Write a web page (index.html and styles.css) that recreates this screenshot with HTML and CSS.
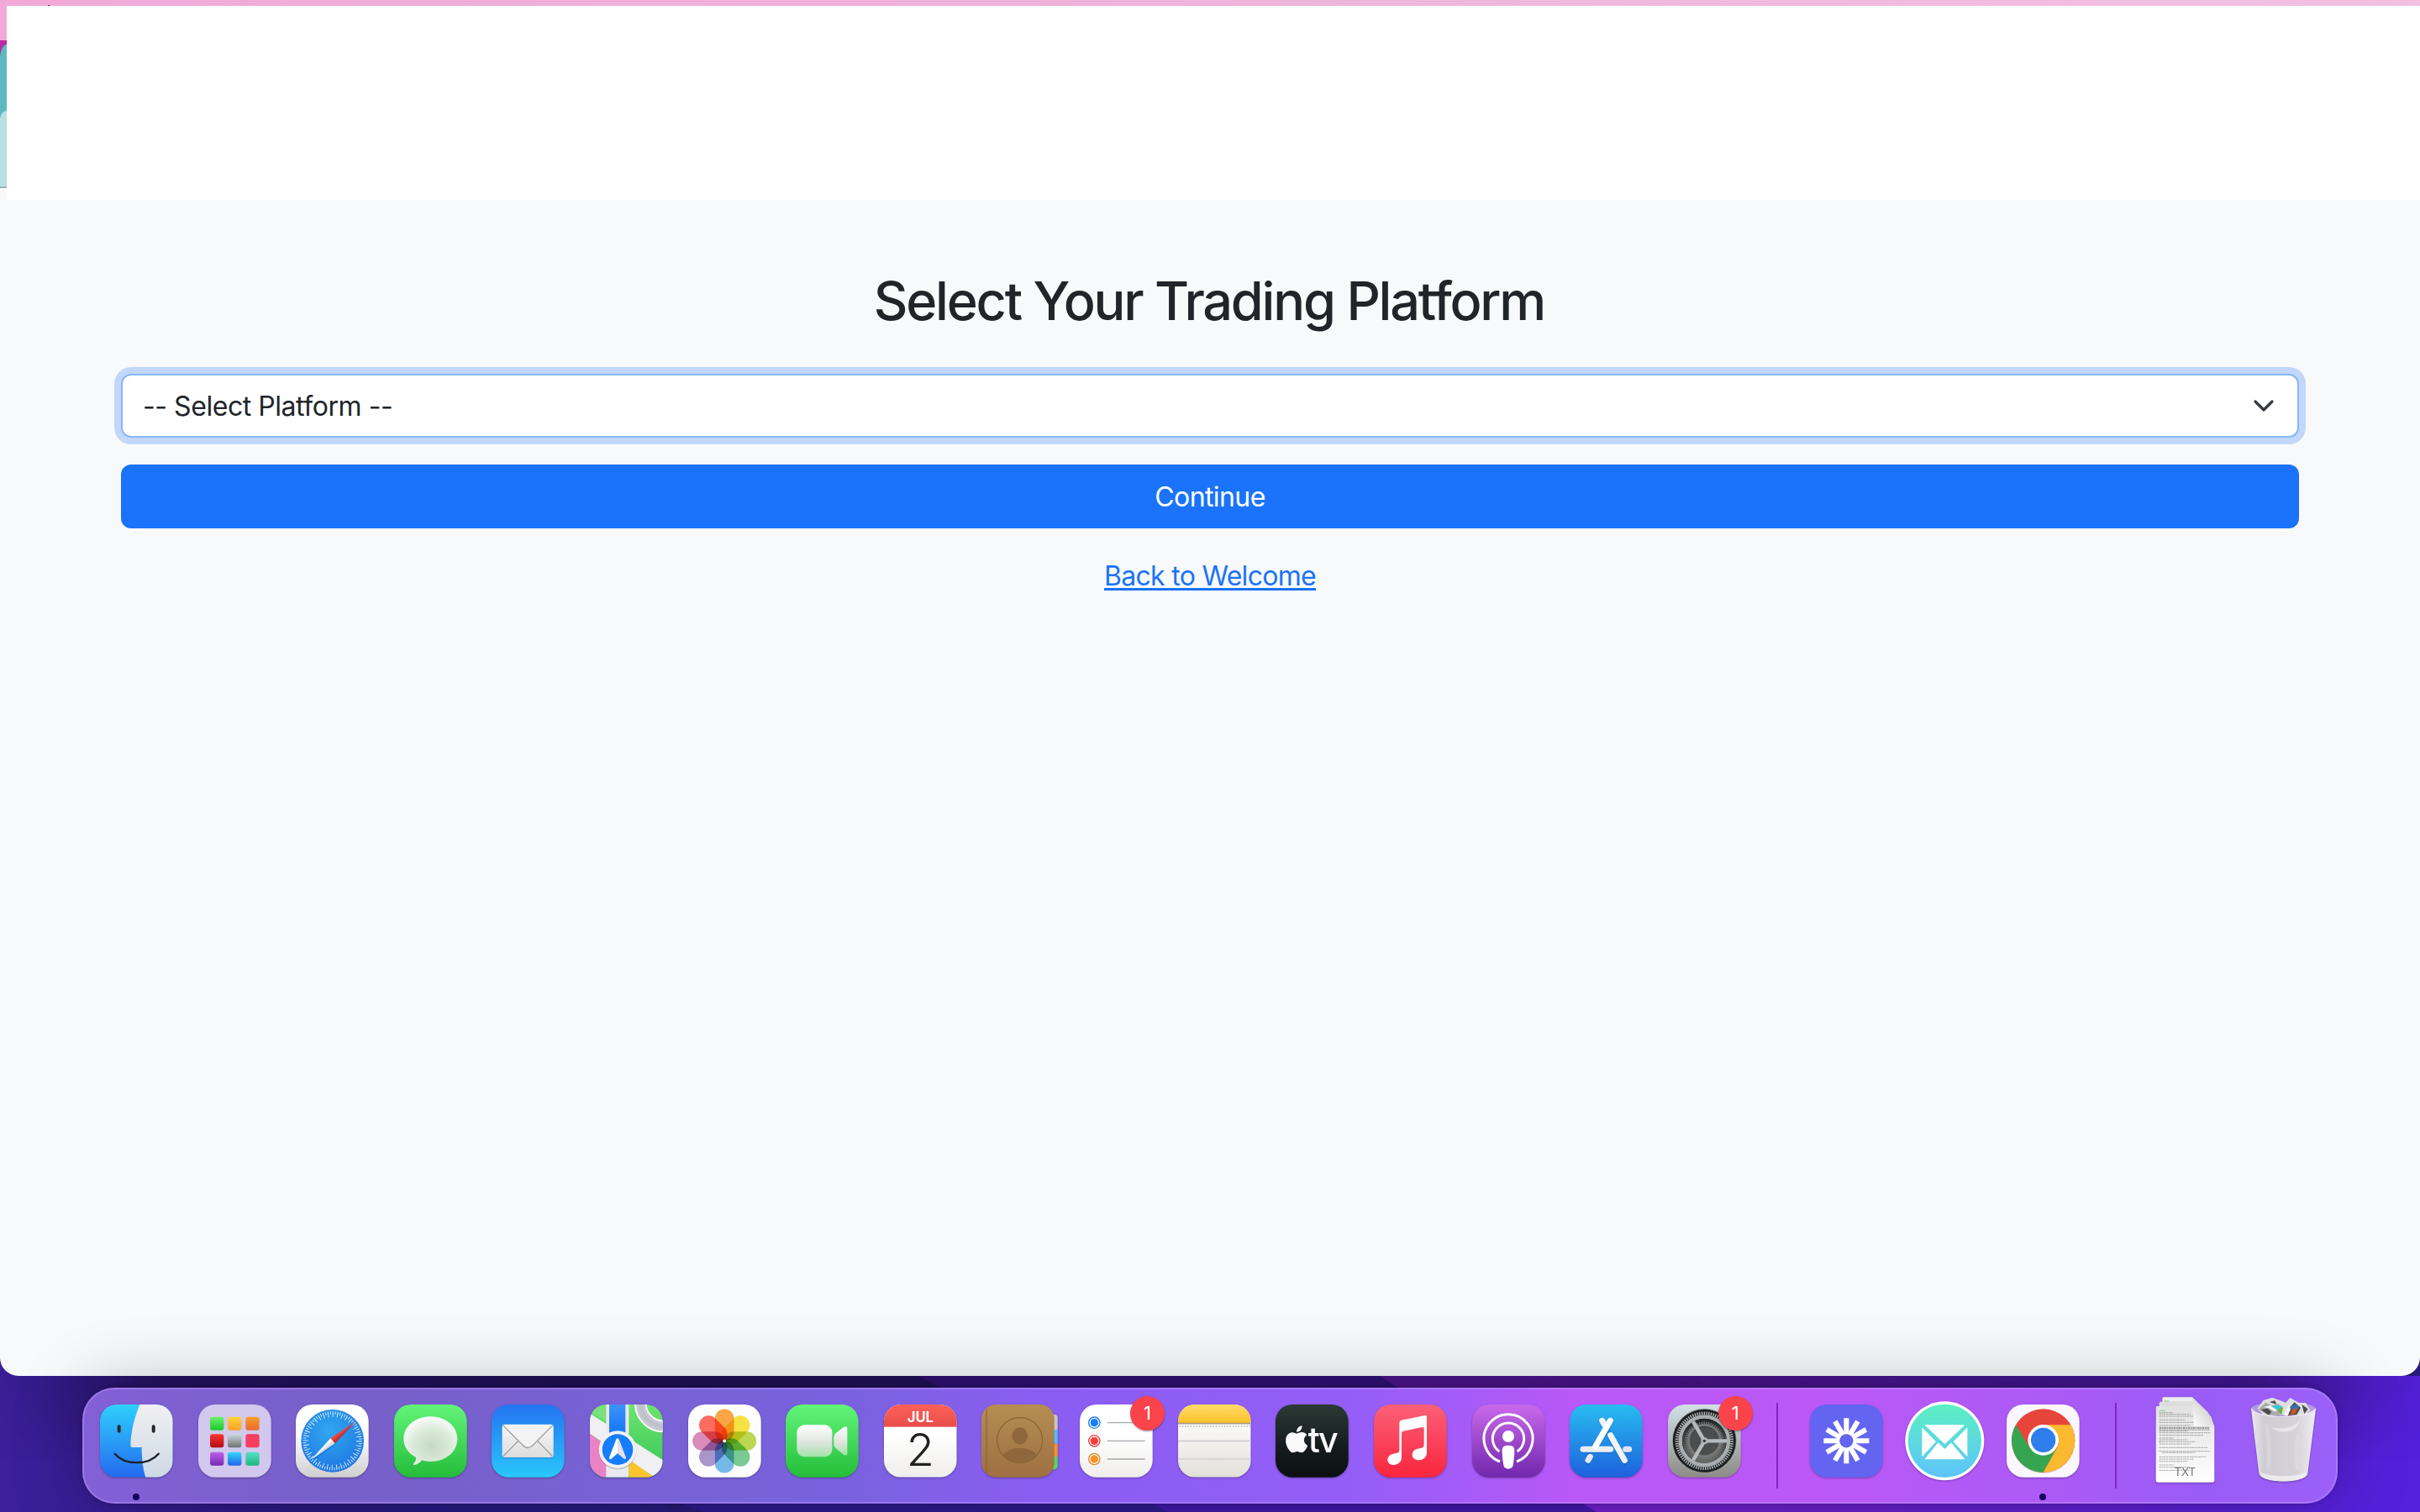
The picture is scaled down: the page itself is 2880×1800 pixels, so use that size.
FILE: index.html
```html
<!DOCTYPE html>
<html lang="en">
<head>
<meta charset="utf-8">
<title>Select Your Trading Platform</title>
<link rel="stylesheet" href="styles.css">
</head>
<body>
<svg class="wallpaper" viewBox="0 0 2880 200" preserveAspectRatio="none" aria-hidden="true">
  <defs>
    <linearGradient id="wpBase" x1="0" x2="1"><stop offset="0" stop-color="#3d1f9c"/><stop offset=".12" stop-color="#2b1a86"/><stop offset=".3" stop-color="#281b80"/></linearGradient>
    <linearGradient id="wpEnd" x1="0" x2="1"><stop offset="0" stop-color="#7a20d4"/><stop offset=".45" stop-color="#6a20d0"/><stop offset="1" stop-color="#5420dc"/></linearGradient>
    <linearGradient id="wpShade" x1="0" x2="1"><stop offset="0" stop-color="#180830" stop-opacity=".05"/><stop offset=".07" stop-color="#180830" stop-opacity=".5"/><stop offset=".93" stop-color="#180830" stop-opacity=".42"/><stop offset="1" stop-color="#180830" stop-opacity=".05"/></linearGradient>
    <linearGradient id="wpFade" x2="0" y2="1"><stop offset=".2" stop-color="#fff"/><stop offset="1" stop-color="#000"/></linearGradient>
    <mask id="wpMask"><rect y="30" width="2880" height="110" fill="url(#wpFade)"/></mask>
  </defs>
  <rect width="2880" height="200" fill="url(#wpBase)"/>
  <path d="M640 38 L1100 38 L1420 200 L800 200Z" fill="#281a7a"/>
  <path d="M790 184 L840 200 H1420 L1300 150Z" fill="#2e1c90"/>
  <path d="M1093 38 H1680 L1960 200 H1390Z" fill="#4219ac"/>
  <path d="M1642 38 H2880 V200 H1900Z" fill="url(#wpEnd)"/>
  <rect y="30" width="2880" height="110" fill="url(#wpShade)" mask="url(#wpMask)"/>
</svg>
<main class="window">
  <div class="strip"><i></i></div>
  <div class="blank"><div class="sliver"><i class="tab"></i><i class="bar"></i></div></div>
  <section class="content">
    <h1>Select Your Trading Platform</h1>
    <div class="select" tabindex="0"><span>-- Select Platform --</span>
      <svg width="32" height="24" viewBox="0 0 16 12"><path d="M3 3.500l5 5 5-5" fill="none" stroke="#343a40" stroke-width="1.600" stroke-linecap="round" stroke-linejoin="round"/></svg>
    </div>
    <button class="primary">Continue</button>
    <a class="back" href="#">Back to Welcome</a>
  </section>
</main>
<footer class="dock">
  <div class="app running"><svg viewBox="0 0 260 260">
    <defs><linearGradient id="fb" x2="0" y2="1"><stop stop-color="#2fd0fc"/><stop offset="1" stop-color="#236af0"/></linearGradient><linearGradient id="fw" x2="0" y2="1"><stop stop-color="#f1f0f2"/><stop offset="1" stop-color="#ced9e5"/></linearGradient><clipPath id="tile"><rect width="260" height="260" rx="60"/></clipPath></defs>
    <g clip-path="url(#tile)"><rect width="260" height="260" fill="url(#fb)"/><path d="M142 0C124 45 110 95 109 146q0 7 7 7H149C149 192 153 232 163 260H260V0Z" fill="url(#fw)"/></g>
    <path d="M68 79v16M191 79v16" stroke="#24282e" stroke-width="12" stroke-linecap="round"/><path d="M53 176C89 218 173 218 209 176" fill="none" stroke="#1c2026" stroke-width="7" stroke-linecap="round"/>
  </svg></div>
  <div class="app"><svg viewBox="0 0 260 260">
    <defs><linearGradient id="l1" x2="0" y2="1"><stop stop-color="#6df06a"/><stop offset="1" stop-color="#1fc92b"/></linearGradient><linearGradient id="l2" x2="0" y2="1"><stop stop-color="#fdd23a"/><stop offset="1" stop-color="#fba325"/></linearGradient><linearGradient id="l3" x2="0" y2="1"><stop stop-color="#f89f2a"/><stop offset="1" stop-color="#ea6a2d"/></linearGradient><linearGradient id="l4" x2="0" y2="1"><stop stop-color="#f83434"/><stop offset="1" stop-color="#b30b12"/></linearGradient><linearGradient id="l5" x2="0" y2="1"><stop stop-color="#cbd9e0"/><stop offset="1" stop-color="#6f7172"/></linearGradient><linearGradient id="l7" x2="0" y2="1"><stop stop-color="#bd60ec"/><stop offset="1" stop-color="#742bab"/></linearGradient><linearGradient id="l8" x2="0" y2="1"><stop stop-color="#2fd8fb"/><stop offset="1" stop-color="#2463ea"/></linearGradient><linearGradient id="l9" x2="0" y2="1"><stop stop-color="#55e0cc"/><stop offset="1" stop-color="#20b578"/></linearGradient></defs>
    <rect width="260" height="260" rx="60" fill="#d2c8ed"/>
    <g><rect x="42" y="44" width="49" height="48" rx="9" fill="url(#l1)"/><rect x="105" y="44" width="49" height="48" rx="9" fill="url(#l2)"/><rect x="169" y="44" width="49" height="48" rx="9" fill="url(#l3)"/><rect x="42" y="106" width="49" height="48" rx="9" fill="url(#l4)"/><rect x="105" y="106" width="49" height="48" rx="9" fill="url(#l5)"/><rect x="169" y="106" width="49" height="48" rx="9" fill="#f93d60"/><rect x="42" y="170" width="49" height="48" rx="9" fill="url(#l7)"/><rect x="105" y="170" width="49" height="48" rx="9" fill="url(#l8)"/><rect x="169" y="170" width="49" height="48" rx="9" fill="url(#l9)"/></g>
  </svg></div>
  <div class="app"><svg viewBox="0 0 260 260">
    <defs><linearGradient id="sw" x2="0" y2="1"><stop offset=".4" stop-color="#fff"/><stop offset="1" stop-color="#cfcfcf"/></linearGradient><radialGradient id="sb" cx=".45" cy=".35" r=".7"><stop stop-color="#30a9ef"/><stop offset="1" stop-color="#1e72e3"/></radialGradient></defs>
    <rect width="260" height="260" rx="60" fill="url(#sw)"/><circle cx="131" cy="130" r="112" fill="url(#sb)"/>
    <circle cx="131" cy="130" r="95" fill="none" stroke="#d8eefc" stroke-width="20" stroke-dasharray="3 13.667" pathLength="600"/><circle cx="131" cy="130" r="100" fill="none" stroke="#c4e4fa" stroke-width="11" stroke-dasharray="3 13.667" stroke-dashoffset="8.333" pathLength="600"/>
    <path d="M60 202L140 143 211 66Z" fill="#134fa8" opacity=".35"/><path d="M211 63L124 121 139 139Z" fill="#f0443f"/><path d="M211 63L132 130 139 139Z" fill="#c9302f"/><path d="M57 195L124 121 139 139Z" fill="#fff"/><path d="M57 195L132 130 139 139Z" fill="#d3dbe2"/>
  </svg></div>
  <div class="app"><svg viewBox="0 0 260 260">
    <defs><linearGradient id="gr" x2="0" y2="1"><stop stop-color="#62f57a"/><stop offset="1" stop-color="#25bd3a"/></linearGradient><radialGradient id="bub" cx=".52" cy=".62" r=".65"><stop stop-color="#c4dac5"/><stop offset=".55" stop-color="#dbead9"/><stop offset="1" stop-color="#fff"/></radialGradient></defs>
    <rect width="260" height="260" rx="60" fill="url(#gr)"/><path d="M130 43C184 43 226 78 226 123S184 204 130 204C118 204 109 202 100 199 92 209 80 216 71 216 68 216 68 213 71 210 77 203 79 195 78 189 50 174 34 150 34 123 34 78 76 43 130 43Z" fill="url(#bub)"/>
  </svg></div>
  <div class="app"><svg viewBox="0 0 260 260">
    <defs><linearGradient id="ml" x2="0" y2="1"><stop stop-color="#2574f0"/><stop offset="1" stop-color="#28c7fb"/></linearGradient><linearGradient id="en" x2="0" y2="1"><stop stop-color="#f8f8f8"/><stop offset="1" stop-color="#dcdcdd"/></linearGradient></defs>
    <rect width="260" height="260" rx="60" fill="url(#ml)"/><rect x="39" y="75" width="182" height="118" rx="9" fill="#1b5fa8" opacity=".35"/><rect x="38" y="71" width="183" height="118" rx="9" fill="url(#en)"/>
    <path d="M42 185L95 130M217 185L164 130" stroke="#8f8f92" stroke-width="3"/><path d="M41 75L110 144Q129 165 149 144L218 75" fill="#f3f3f4" stroke="#a2a2a5" stroke-width="4"/><path d="M75 84H184" stroke="#ddd" stroke-width="2" stroke-dasharray="3 2"/>
  </svg></div>
  <div class="app"><svg viewBox="0 0 260 260">
    <defs><linearGradient id="mg" x2="0" y2="1"><stop stop-color="#6fe36f"/><stop offset="1" stop-color="#33c558"/></linearGradient><linearGradient id="mb" x2="0" y2="1"><stop stop-color="#3d93fa"/><stop offset="1" stop-color="#0b6ff6"/></linearGradient></defs>
    <g clip-path="url(#tile)"><rect width="260" height="260" fill="url(#mg)"/><path d="M0 104L60 148V260H0Z" fill="#ea82c6"/><path d="M0 32L260 198V280L0 104Z" fill="#f0eff4"/><path d="M0 0H58V62L0 24Z" fill="#7be07a"/><path d="M58 0H139V260H58Z" fill="#e9e9ef"/><path d="M139 196L230 260H139Z" fill="#fcc42c"/><path d="M69 0H127V130H69Z" fill="url(#mb)"/>
    <circle cx="263" cy="-4" r="82" fill="none" stroke="#fff" stroke-width="44"/><circle cx="263" cy="-4" r="82" fill="none" stroke="#c8c8d2" stroke-width="33"/><circle cx="263" cy="-4" r="82" fill="none" stroke="#b8b8c4" stroke-width="13" opacity=".5"/></g>
    <circle cx="99" cy="165" r="67" fill="#555" opacity=".3"/><circle cx="99" cy="161" r="67" fill="#f1f1f5"/><circle cx="99" cy="161" r="55" fill="#167efb"/><path d="M99 121Q103 121 105 127L129 190Q129 198 122 194L99 175Z" fill="#dfe2ea"/><path d="M99 121Q95 121 93 127L69 190Q69 198 76 194L99 175Z" fill="#fff"/>
  </svg></div>
  <div class="app"><svg viewBox="0 0 260 260">
    <rect width="260" height="260" rx="60" fill="#fdfdfe"/>
    <g class="petals" transform="translate(129.500 130.500)"><rect x="-34" y="-114" width="68" height="114" rx="34" fill="#fb9b33"/><rect x="-34" y="-114" width="68" height="114" rx="34" fill="#f5df2c" transform="rotate(45)"/><rect x="-34" y="-114" width="68" height="114" rx="34" fill="#b4d33f" transform="rotate(90)"/><rect x="-34" y="-114" width="68" height="114" rx="34" fill="#6bc588" transform="rotate(135)"/><rect x="-34" y="-114" width="68" height="114" rx="34" fill="#66b1e6" transform="rotate(180)"/><rect x="-34" y="-114" width="68" height="114" rx="34" fill="#a08bc6" transform="rotate(225)"/><rect x="-34" y="-114" width="68" height="114" rx="34" fill="#d57fb0" transform="rotate(270)"/><rect x="-34" y="-114" width="68" height="114" rx="34" fill="#fb5c50" transform="rotate(315)"/></g><circle cx="129.500" cy="130.500" r="6" fill="#f0f0e8"/>
  </svg></div>
  <div class="app"><svg viewBox="0 0 260 260">
    <defs><linearGradient id="cam" x2="0" y2="1"><stop stop-color="#fff"/><stop offset=".55" stop-color="#dfe4df"/><stop offset="1" stop-color="#a2e3a6"/></linearGradient></defs>
    <rect width="260" height="260" rx="60" fill="url(#gr)"/><rect x="40" y="73" width="126" height="114" rx="27" fill="url(#cam)"/><path d="M172 117Q172 108 179 102L207 81Q220 74 220 86V174Q220 186 207 179L179 157Q172 152 172 144Z" fill="url(#cam)"/>
  </svg></div>
  <div class="app"><svg viewBox="0 0 260 260">
    <defs><linearGradient id="cr" x2="0" y2="1"><stop stop-color="#fd6159"/><stop offset="1" stop-color="#e94e4a"/></linearGradient><linearGradient id="pap" x2="0" y2="1"><stop offset=".4" stop-color="#fff"/><stop offset="1" stop-color="#efeeec"/></linearGradient></defs>
    <g clip-path="url(#tile)"><rect width="260" height="260" fill="url(#pap)"/><rect width="260" height="80" fill="url(#cr)"/></g>
    <text x="130" y="62" class="month">JUL</text><text x="130" y="220" class="day">2</text>
  </svg></div>
  <div class="app"><svg viewBox="0 0 260 260">
    <defs><linearGradient id="ct" x2="0" y2="1"><stop stop-color="#b58d53"/><stop offset="1" stop-color="#9f7043"/></linearGradient></defs>
    <rect x="230" y="36" width="42" height="60" rx="12" fill="#c9c6c0"/><rect x="230" y="174" width="42" height="58" rx="12" fill="#52d760"/><path d="M240 90h32v50h-32Z" fill="#54bdf3"/><path d="M240 140h32v46h-32Z" fill="#f6922b"/>
    <rect width="260" height="260" rx="52" fill="url(#ct)"/><path d="M16 18V242M20 14V246" stroke="#8a6233" stroke-width="3" opacity=".6"/>
    <circle cx="137" cy="128" r="81" fill="none" stroke="#8b6335" stroke-width="4"/><ellipse cx="137" cy="112" rx="28" ry="31" fill="#8f673a"/><path d="M77 180C100 147 174 147 197 180 168 220 106 220 77 180Z" fill="#8f673a"/>
  </svg></div>
  <div class="app"><svg viewBox="0 0 260 260">
    <rect width="260" height="260" rx="60" fill="url(#pap)"/><g fill="none" stroke-width="4"><circle cx="52" cy="65" r="20" stroke="#2479df"/><circle cx="52" cy="130" r="20" stroke="#df4340"/><circle cx="52" cy="195" r="20" stroke="#e08a27"/></g><circle cx="52" cy="65" r="14" fill="#157efb"/><circle cx="52" cy="130" r="14" fill="#fa3d3a"/><circle cx="52" cy="195" r="14" fill="#f7922a"/><path d="M98 65H233M98 130H233M98 195H233" stroke="#a9a9ad" stroke-width="4"/>
  </svg><span class="badge">1</span></div>
  <div class="app"><svg viewBox="0 0 260 260">
    <defs><linearGradient id="ny" x2="0" y2="1"><stop stop-color="#fedb6a"/><stop offset="1" stop-color="#fdc128"/></linearGradient><linearGradient id="nw" x2="0" y2="1"><stop offset=".3" stop-color="#fafafa"/><stop offset="1" stop-color="#e2dfd8"/></linearGradient></defs>
    <g clip-path="url(#tile)"><rect width="260" height="260" fill="url(#nw)"/><rect width="260" height="66" fill="url(#ny)"/><path d="M0 68H260" stroke="#a39a85" stroke-width="5"/><path d="M4 78H260" stroke="#b9b9b9" stroke-width="5" stroke-dasharray="5 5"/><path d="M0 130H260M0 195H260" stroke="#d0cfd0" stroke-width="5"/></g>
  </svg></div>
  <div class="app"><svg viewBox="0 0 260 260">
    <defs><linearGradient id="tv" x2="0" y2="1"><stop stop-color="#2b3934"/><stop offset=".6" stop-color="#151b1d"/><stop offset="1" stop-color="#0b0f12"/></linearGradient></defs>
    <rect width="260" height="260" rx="60" fill="url(#tv)"/><path transform="translate(27.500 76) scale(4)" fill="#fafafa" d="M12.152 6.896c-.948 0-2.415-1.078-3.96-1.04-2.04.027-3.91 1.183-4.961 3.014-2.117 3.675-.546 9.103 1.519 12.09 1.013 1.454 2.208 3.09 3.792 3.039 1.52-.065 2.09-.987 3.935-.987 1.831 0 2.35.987 3.96.948 1.637-.026 2.676-1.48 3.676-2.948 1.156-1.688 1.636-3.325 1.662-3.415-.039-.013-3.182-1.221-3.22-4.857-.026-3.04 2.48-4.494 2.597-4.559-1.429-2.09-3.623-2.324-4.39-2.376-2-.156-3.675 1.09-4.61 1.09zM15.53 3.83c.843-1.012 1.4-2.427 1.245-3.83-1.207.052-2.662.805-3.532 1.818-.78.896-1.454 2.338-1.273 3.714 1.338.104 2.715-.688 3.559-1.701"/><text x="116" y="171" class="tv" textLength="108">tv</text>
  </svg></div>
  <div class="app"><svg viewBox="0 0 260 260">
    <defs><linearGradient id="mu" x2="0" y2="1"><stop stop-color="#fb6078"/><stop offset="1" stop-color="#fa253e"/></linearGradient></defs>
    <rect width="260" height="260" rx="60" fill="url(#mu)"/><path d="M91 66Q91 58 98 56L182 39Q189 38 189 45V172C189 190 174 199 161 199 147 199 137 191 137 180 137 165 149 159 163 157L172 155Q179 153 179 145V86Q179 80 173 81L105 95Q99 97 99 102V190C99 206 85 216 71 216 58 216 49 208 49 198 49 184 60 178 74 175L83 173Q91 171 91 162Z" fill="#fff"/>
  </svg></div>
  <div class="app"><svg viewBox="0 0 260 260">
    <defs><linearGradient id="po" x2="0" y2="1"><stop stop-color="#c969ea"/><stop offset="1" stop-color="#7128ad"/></linearGradient></defs>
    <rect width="260" height="260" rx="60" fill="url(#po)"/><g fill="none" stroke="#fff" stroke-width="9"><path d="M99 204A87 87 0 1 1 159 204"/><path d="M97 168A56 56 0 1 1 161 168"/></g><circle cx="129" cy="114" r="21" fill="#fff"/><path d="M107 162Q107 146 129 146T151 162C151 184 149 200 146 216 144 234 114 234 112 216 109 200 107 184 107 162Z" fill="#fff"/>
  </svg></div>
  <div class="app"><svg viewBox="0 0 260 260">
    <defs><linearGradient id="as" x2="0" y2="1"><stop stop-color="#29bcf0"/><stop offset="1" stop-color="#1d61dd"/></linearGradient></defs>
    <rect width="260" height="260" rx="60" fill="url(#as)"/><g fill="none" stroke-width="21" stroke-linecap="round" stroke="#124a9e" opacity=".25" transform="translate(0 5)"><path d="M116 58L196 199M48 160H145M145 58L90 150M74 186L65 200M205 160H212"/></g><g fill="none" stroke-width="21" stroke-linecap="round"><path d="M200 160H212" stroke="#dce6f0"/><path d="M116 58L124 72M146 110L196 199" stroke="#f1f4f8"/><path d="M48 160H146" stroke="#e9eef4"/><path d="M145 58L92 150" stroke="#fff"/><path d="M73 187L66 199" stroke="#e2e9f2"/></g>
  </svg></div>
  <div class="app"><svg viewBox="0 0 260 260">
    <defs><linearGradient id="se" x2="0" y2="1"><stop stop-color="#d2e0e7"/><stop offset="1" stop-color="#8c8b87"/></linearGradient><linearGradient id="sg" x2="0" y2="1"><stop stop-color="#202425"/><stop offset="1" stop-color="#6b6b68"/></linearGradient></defs>
    <rect width="260" height="260" rx="60" fill="url(#se)"/><circle cx="130" cy="130" r="114" fill="#1c2021"/><circle cx="130" cy="130" r="114" fill="none" stroke="#aeb1b0" stroke-width="3" opacity=".7"/><circle cx="130" cy="130" r="98" fill="none" stroke="#b7bcbf" stroke-width="12" stroke-dasharray="4 4" pathLength="600"/><circle cx="130" cy="130" r="86" fill="none" stroke="#a9aeb0" stroke-width="13"/><circle cx="130" cy="130" r="79" fill="url(#sg)"/><circle cx="130" cy="130" r="65" fill="none" stroke="#747776" stroke-width="8" stroke-dasharray="4 4" pathLength="400"/><circle cx="130" cy="130" r="57" fill="none" stroke="#747776" stroke-width="10"/><circle cx="130" cy="130" r="50" fill="#4c4e4e"/><path d="M130 130H210M130 130L90 61M130 130L90 199" stroke="#b6bbbd" stroke-width="13"/><circle cx="130" cy="130" r="12" fill="#b0b5b7"/><circle cx="130" cy="130" r="5" fill="#333"/>
  </svg><span class="badge">1</span></div>
  <span class="divider"></span>
  <div class="app"><svg viewBox="0 0 260 260">
    <rect width="260" height="260" rx="60" fill="#6365f1"/><g stroke="#fff" stroke-width="18" transform="translate(130 130)"><path d="M0-81V-26M0 26V81M-81 0H-26M26 0H81"/><path d="M0-81V-26M0 26V81M-81 0H-26M26 0H81" transform="rotate(30)"/><path d="M0-81V-26M0 26V81M-81 0H-26M26 0H81" transform="rotate(60)"/><circle r="29" fill="none" stroke-width="9"/></g>
  </svg></div>
  <div class="app"><svg viewBox="0 0 260 260">
    <defs><linearGradient id="mt" x2="0" y2="1"><stop stop-color="#5befc2"/><stop offset="1" stop-color="#5ec4fa"/></linearGradient></defs>
    <circle cx="130" cy="130" r="141" fill="#fff"/><circle cx="130" cy="130" r="131" fill="url(#mt)"/><path d="M58 73H202L130 142ZM49 82V187L99 133ZM211 82V187L161 133ZM58 196H202L153 136 130 159 107 136Z" fill="#fff"/>
  </svg></div>
  <div class="app running"><svg viewBox="0 0 260 260">
    <rect width="260" height="260" rx="60" fill="#faf7fe"/><circle cx="131" cy="134" r="112" fill="#433" opacity=".2"/><circle cx="131" cy="129" r="113" fill="#e7453b"/><path d="M33 73A113 113 0 0 0 131 242L180 155 83 155Z" fill="#36a551"/><path d="M229 73A113 113 0 0 1 131 242L180 155A57 57 0 0 0 131 73Z" fill="#fbb92f"/><circle cx="131" cy="127" r="55" fill="#fff"/><circle cx="131" cy="127" r="44" fill="#2f7eed"/>
  </svg></div>
  <span class="divider"></span>
  <div class="app"><svg viewBox="0 0 260 260">
    <defs><linearGradient id="tx" x2="0" y2="1"><stop stop-color="#e2e2e2"/><stop offset="1" stop-color="#fff"/></linearGradient><linearGradient id="fo" x1="0" y1="1" x2="1" y2="0"><stop stop-color="#fff"/><stop offset="1" stop-color="#bdbdbd"/></linearGradient></defs>
    <path d="M49-20q0-6 6-6H156L211 28V60H49Z" fill="#eee"/><path d="M38-4q0-6 6-6H170L223 45V70H38Z" fill="#ddd" stroke="#c8c8c8"/><path d="M26 12Q26 6 32 6H162L235 78V271Q235 278 228 278H32Q26 278 26 271Z" fill="url(#tx)"/>
    <g stroke="#777" stroke-width="2.500" stroke-dasharray="7 2 4 1 9 2"><path d="M38 29H86M38 35H150M38 42H162M38 55H130M38 64H160M38 75H150M38 91H218M38 95H140M38 101H222M38 110H196M38 120H90M38 126H140M38 133H166M38 141H150M38 154H210M38 167H218M48 172H166M38 187H205M38 195H160M38 203H140M38 216H90M38 224H145M38 235H150" opacity=".75"/></g><path d="M38 84H218" stroke="#888" stroke-width="7" stroke-dasharray="8 2 5 2" opacity=".8"/><path d="M38 22H60M38 133H44M56-12H74" stroke="#4eb45f" stroke-width="2"/>
    <path d="M156-25L211 28 224 46 235 78H168Q161 78 161 68Z" fill="url(#fo)"/><text x="130" y="256" class="txt">TXT</text>
  </svg></div>
  <div class="app"><svg viewBox="0 0 260 260">
    <defs><linearGradient id="tr"><stop stop-color="#eceaf0"/><stop offset=".2" stop-color="#cfccd3"/><stop offset=".7" stop-color="#d5d3d8"/><stop offset="1" stop-color="#efecf4"/></linearGradient></defs>
    <ellipse cx="130" cy="14" rx="115" ry="23" fill="#b29be0"/><path d="M38 15L58-14 90-25 124-13 138-6 154-24 186-6 210-6 226 20 205 38H60Z" fill="#dedede"/><path d="M42 17L66-7 90 4 112-3 130 14 116 39H76Z" fill="#aaa"/><path d="M50 18L74 14 88 26 78 38ZM80-9L100-14 106 0ZM150 14L170-8 192 12 178 36 148 39ZM196 0L218 16 205 34Z" fill="#4b4b4d"/><path d="M60 10L84 2 108 20 100 26 76 12Z" fill="#f4f4f4"/><path d="M86 6L116 3 128 8 108 18Z" fill="#33c6df"/><path d="M108 18L128 8 124 38Z" fill="#64b43f"/><path d="M152 10L176-2 188 14 164 22Z" fill="#356eae"/><path d="M160 18L180 12 176 30 155 38Z" fill="#c85730"/><path d="M132 39L150-2 156 18 144 42Z" fill="#f5f5f5"/>
    <path d="M15 15C40 52 220 52 246 15L217 246C214 284 48 284 43 246Z" fill="url(#tr)"/><path d="M48 240C75 261 186 261 212 240L208 254C194 281 66 281 52 254Z" fill="#fff" opacity=".55"/><path d="M84 82Q156 96 190 56Q176 104 114 96Z" fill="#fff" opacity=".45"/><path d="M70 70Q84 170 75 230M182 110Q170 180 181 230" stroke="#fff" stroke-width="14" opacity=".15" fill="none"/><path d="M15 15C40 52 220 52 246 15" fill="none" stroke="#eee9f8" stroke-width="4"/>
  </svg></div>
</footer>
</body>
</html>
```
FILE: styles.css
```css
* { box-sizing: border-box; }
body {
  margin: 0;
  width: 2880px;
  height: 1800px;
  overflow: hidden;
  position: relative;
  display: flex;
  flex-direction: column;
  background: #2c1a80;
  font-family: Inter, "Liberation Sans", sans-serif;
  font-size: 32px;
  color: #212529;
}
/* desktop picture behind the window and the dock */
.wallpaper { position: absolute; left: 0; bottom: 0; width: 2880px; height: 200px; z-index: -1; }
.window {
  height: 1638px;
  flex: none;
  background: #f8f9fb;
  border-radius: 0 0 22px 22px;
  overflow: hidden;
  display: flex;
  flex-direction: column;
}
.strip { height: 7px; flex: none; padding: 6px 0 0 57px; background: linear-gradient(90deg, #f2a9d9, #eeb4dc 50%, #f3c0e2); }
.strip i { display: block; width: 2px; height: 1px; background: #444; }
.blank { height: 231px; flex: none; background: linear-gradient(#fff, #fff) 8px 0 no-repeat; }
/* edge of the browser window that shows beside the blank area */
.sliver {
  width: 8px;
  height: 217px;
  padding-top: 46px;
  display: flex;
  flex-direction: column;
  border-bottom: 2px solid #93b6bd;
  background: linear-gradient(#f2a9d9 41px, #bb2ba0 41px 70px, #5fb8c0 70px);
}
.tab { height: 79px; background: #5fb8c0; border-top-left-radius: 8px 16px; }
.bar { flex: 1; background: #b9e0e3; border-top-left-radius: 8px 10px; }
.content { display: flex; flex-direction: column; padding: 82px 144px 0; text-align: center; font-variant-ligatures: none; }
h1 { margin: 0 0 48px; font-size: 63px; line-height: 77px; font-weight: 500; letter-spacing: -2.200px; text-indent: -2.200px; }
.select {
  height: 76px;
  padding: 0 24px;
  display: flex;
  align-items: center;
  justify-content: space-between;
  border: 2px solid #86b7fe;
  border-radius: 12px;
  background: #fff;
  box-shadow: 0 0 0 8px #c2d7fa;
  outline: 0;
  letter-spacing: -.450px;
}
.primary {
  height: 76px;
  margin: 32px 0 0;
  padding: 0;
  border: 0;
  border-radius: 12px;
  background: #1a73fa;
  color: #fff;
  font: inherit;
  letter-spacing: -.600px;
}
.back { align-self: center; margin-top: 37px; line-height: 40px; color: #1a73fa; letter-spacing: -.700px; text-decoration-thickness: 3px; text-underline-offset: 3px; }
.dock {
  width: 2684px;
  height: 138px;
  flex: none;
  margin: 14px 0 0 98px;
  padding: 18px 20px 0 19px;
  display: flex;
  gap: 29.930px;
  border: 2px solid rgba(190, 150, 255, .45);
  border-radius: 38px;
  background: linear-gradient(90deg, #8260d6, #7760c8 12%, #7862dd 33%, #8b5df2 43%, #935ef7 56%, #b758f7 66%, #bb58f7 77%, #ac5af6 87%, #9a5cf6 94%, #9b60f8);
  background-origin: border-box;
  box-shadow: 0 2px 84px rgba(0, 0, 0, .28), 0 0 6px rgba(0, 0, 0, .2);
}
.app { position: relative; flex: none; width: 86.700px; }
.app svg { display: block; width: 86.700px; height: 86.700px; overflow: visible; filter: drop-shadow(0 1px 1px rgba(0, 0, 0, .3)); }
.running::after { content: ""; position: absolute; left: 39.300px; top: 106px; width: 8px; height: 8px; border-radius: 50%; background: #160060; }
.divider { flex: none; width: 2px; height: 102px; margin: -2px 8.700px 0 12.500px; background: #8424c0; }
.badge { position: absolute; left: 60px; top: -10px; width: 41px; height: 41px; border-radius: 50%; background: #fb434b; color: #fff; font-size: 22px; line-height: 41px; text-align: center; box-shadow: 0 1px 2px rgba(0, 0, 0, .4); }
.petals { isolation: isolate; }
.petals rect { mix-blend-mode: multiply; opacity: .9; }
.month { font-size: 50px; font-weight: 700; fill: #fff; text-anchor: middle; }
.day { font-size: 162px; font-weight: 300; fill: #222; text-anchor: middle; }
.tv { font-size: 124px; font-weight: 500; fill: #fafafa; }
.txt { font-size: 40px; fill: #777; text-anchor: middle; }
```
